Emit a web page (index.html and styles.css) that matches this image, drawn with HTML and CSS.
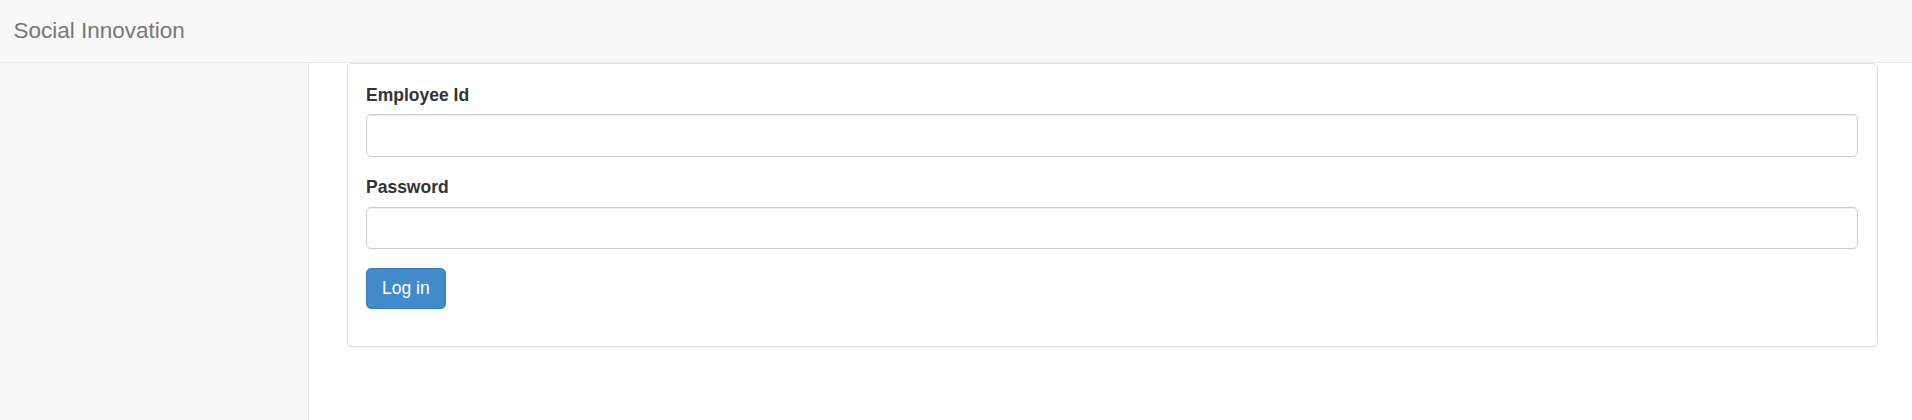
FILE: index.html
```html
<!DOCTYPE html>
<html lang="en">
<head>
<meta charset="utf-8">
<title>Social Innovation</title>
<link rel="stylesheet" href="styles.css">
</head>
<body>
<header class="navbar">
  <a class="brand" href="#">Social Innovation</a>
</header>
<div class="layout">
  <aside class="sidebar"></aside>
  <main class="main">
    <div class="panel">
      <form class="login-form">
        <div class="form-group">
          <label class="label" for="emp">Employee Id</label>
          <input class="input" id="emp" type="text">
        </div>
        <div class="form-group">
          <label class="label" for="pwd">Password</label>
          <input class="input" id="pwd" type="password">
        </div>
        <div class="form-group">
          <button class="btn-primary" type="button">Log in</button>
        </div>
      </form>
    </div>
  </main>
</div>
</body>
</html>
```
FILE: styles.css
```css
html, body {
  margin: 0;
  padding: 0;
}
body {
  font-family: "Liberation Sans", Arial, sans-serif;
  font-size: 17.5px;
  line-height: 25px;
  color: #333;
  background: #fff;
}
.navbar {
  height: 62px;
  box-sizing: content-box;
  background: #f8f8f8;
  border-bottom: 1px solid #e7e7e7;
}
.brand {
  display: inline-block;
  padding: 18px 0 19px 13.5px;
  font-size: 22.5px;
  line-height: 25px;
  color: #777;
  text-decoration: none;
}
.layout {
  display: flex;
  height: calc(100vh - 63px);
}
.sidebar {
  width: 308px;
  flex: none;
  background: #f8f8f8;
  border-right: 1px solid #e7e7e7;
}
.main {
  flex: 1;
  padding: 0 34px 0 38px;
}
.panel {
  border: 1px solid #ddd;
  border-radius: 5px;
  padding: 18.75px 18.75px 17.75px 18px;
  box-shadow: 0 1px 1px rgba(0, 0, 0, 0.05);
  background: #fff;
}
.login-form {
  margin: 0;
}
.form-group {
  margin-bottom: 18.75px;
}
.label {
  display: block;
  font-weight: bold;
  margin-bottom: 6.25px;
}
.input {
  display: block;
  width: 100%;
  height: 42.5px;
  box-sizing: border-box;
  border: 1px solid #ccc;
  border-radius: 5px;
  box-shadow: inset 0 1px 1px rgba(0, 0, 0, 0.075);
  padding: 7.5px 15px;
  font: inherit;
  background: #fff;
  margin: 0;
}
.btn-primary {
  display: inline-block;
  font-family: inherit;
  font-size: 17.5px;
  height: 41.5px;
  box-sizing: border-box;
  line-height: 24.5px;
  padding: 7px 15px;
  color: #fff;
  background: #428bca;
  border: 1px solid #357ebd;
  border-radius: 5px;
  margin: 0;
  cursor: pointer;
}
```
